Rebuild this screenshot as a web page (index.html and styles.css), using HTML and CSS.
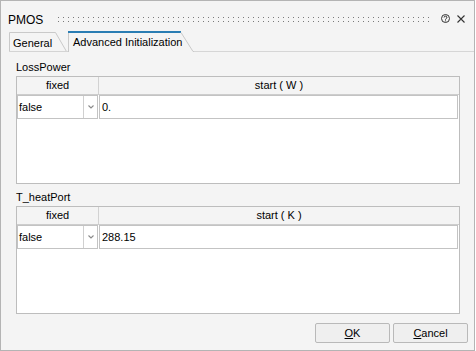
FILE: index.html
```html
<!DOCTYPE html>
<html>
<head>
<meta charset="utf-8">
<link rel="stylesheet" href="styles.css">
</head>
<body>
<div class="window">
  <div class="titlebar">
    <span class="title">PMOS</span>
    <svg class="grip" height="5"><defs><pattern id="dots" width="5" height="4" patternUnits="userSpaceOnUse"><rect width="1" height="1" fill="#7a7a7a"/></pattern></defs><rect width="100%" height="5" fill="url(#dots)"/></svg>
    <svg class="help" width="9" height="9" viewBox="0 0 9 9"><circle cx="4.5" cy="4.5" r="4" fill="none" stroke="#333" stroke-width="1"/><path d="M3.1 3.5 A1.4 1.4 0 1 1 5.2 4.7 C4.6 5 4.5 5.3 4.5 5.8" fill="none" stroke="#333" stroke-width="1"/><rect x="4" y="6.4" width="1" height="1" fill="#333"/></svg>
    <svg class="close" width="8" height="8" viewBox="0 0 8 8"><path d="M0.5 0.5 L7.5 7.5 M7.5 0.5 L0.5 7.5" stroke="#333" stroke-width="1.1"/></svg>
  </div>
  <div class="tabbar">
    <div class="tab tab-general">
      <svg class="tab-shape" width="59" height="21" viewBox="0 0 59 21"><path d="M0.5 21 V1.5 H46.5 L57.5 20.5" fill="none" stroke="#c9c9c9"/><path d="M0 20.5 H59" stroke="#d4d4d4"/></svg>
      <span class="tab-label">General</span>
    </div>
    <div class="tab tab-active">
      <svg class="tab-shape" width="126" height="21" viewBox="0 0 126 21"><path d="M0.5 21 V1" stroke="#c9c9c9"/><rect x="0" y="0" width="113" height="2" fill="#2a7db3"/><path d="M113 1.5 L125 20.5 H126" fill="none" stroke="#c9c9c9"/></svg>
      <span class="tab-label">Advanced Initialization</span>
    </div>
    <div class="tab-rest"></div>
  </div>
  <div class="panel">
    <div class="group">
      <div class="group-label">LossPower</div>
      <div class="table">
        <div class="thead">
          <div class="th th-fixed">fixed</div>
          <div class="th">start ( W )</div>
        </div>
        <div class="row">
          <div class="combo">
            <span class="combo-text">false</span>
            <span class="combo-arrow"><svg width="6" height="4" viewBox="0 0 6 4"><path d="M0.5 0.5 L3 3 L5.5 0.5" fill="none" stroke="#8a8a8a" stroke-width="1.1"/></svg></span>
          </div>
          <div class="edit">0.</div>
        </div>
      </div>
    </div>
    <div class="group">
      <div class="group-label">T_heatPort</div>
      <div class="table">
        <div class="thead">
          <div class="th th-fixed">fixed</div>
          <div class="th">start ( K )</div>
        </div>
        <div class="row">
          <div class="combo">
            <span class="combo-text">false</span>
            <span class="combo-arrow"><svg width="6" height="4" viewBox="0 0 6 4"><path d="M0.5 0.5 L3 3 L5.5 0.5" fill="none" stroke="#8a8a8a" stroke-width="1.1"/></svg></span>
          </div>
          <div class="edit">288.15</div>
        </div>
      </div>
    </div>
  </div>
  <div class="footer">
    <button class="btn"><u>O</u>K</button>
    <button class="btn"><u>C</u>ancel</button>
  </div>
</div>
</body>
</html>
```
FILE: styles.css
```css
html, body {
  margin: 0;
  padding: 0;
  background: #ffffff;
}
body {
  font-family: "Liberation Sans", Arial, sans-serif;
  font-size: 11px;
  color: #000;
}
.window {
  width: 475px;
  height: 351px;
  box-sizing: border-box;
  border: 1px solid #b4b4b4;
  background: #f4f4f4;
  display: flex;
  flex-direction: column;
}
.titlebar {
  height: 30px;
  box-sizing: border-box;
  padding: 12px 9px 0 7px;
  display: flex;
  align-items: flex-start;
}
.title {
  font-size: 12px;
  line-height: 14px;
}
.grip {
  flex: 1;
  margin: 4px 0 0 15px;
}
.help {
  margin: 1px 0 0 9px;
}
.close {
  margin: 2px 0 0 7px;
}
.tabbar {
  height: 21px;
  display: flex;
  padding-left: 8px;
}
.tab {
  position: relative;
  height: 21px;
  box-sizing: border-box;
}
.tab-shape {
  position: absolute;
  left: 0;
  top: 0;
}
.tab-label {
  position: relative;
  display: block;
  line-height: 13px;
  white-space: nowrap;
}
.tab-general {
  width: 59px;
  padding: 6px 0 0 4px;
}
.tab-active {
  width: 126px;
  padding: 5px 0 0 5px;
}
.tab-rest {
  flex: 1;
  height: 21px;
  box-sizing: border-box;
  border-bottom: 1px solid #d6d6d6;
}
.panel {
  padding: 6px 14px 0 15px;
  display: flex;
  flex-direction: column;
  gap: 4px;
}
.group-label {
  height: 18px;
  line-height: 18px;
}
.table {
  height: 108px;
  box-sizing: border-box;
  border: 1px solid #bdbdbd;
  background: #ffffff;
}
.thead {
  display: grid;
  grid-template-columns: 82px 1fr;
  height: 18px;
  box-sizing: border-box;
  background: #f4f4f4;
  border-bottom: 1px solid #cdcdcd;
}
.th {
  text-align: center;
  line-height: 17px;
}
.th-fixed {
  border-right: 1px solid #d2d2d2;
}
.row {
  display: flex;
  gap: 1px;
  padding-right: 1px;
}
.combo {
  width: 81px;
  height: 24px;
  box-sizing: border-box;
  border: 1px solid #c3c3c3;
  display: flex;
}
.combo-text {
  flex: 1;
  padding-left: 1px;
  line-height: 22px;
}
.combo-arrow {
  width: 14px;
  box-sizing: border-box;
  border-left: 1px solid #d0d0d0;
  display: flex;
  align-items: center;
  justify-content: center;
}
.edit {
  flex: 1;
  height: 24px;
  box-sizing: border-box;
  border: 1px solid #c3c3c3;
  padding-left: 2px;
  line-height: 22px;
}
.footer {
  display: flex;
  justify-content: flex-end;
  gap: 3px;
  padding: 9px 6px 0 0;
}
.btn {
  width: 75px;
  height: 20px;
  box-sizing: border-box;
  border: 1px solid #b9b9b9;
  border-radius: 2px;
  background: #efefef;
  font-family: "Liberation Sans", Arial, sans-serif;
  font-size: 11px;
  color: #000;
  padding: 0;
  line-height: 18px;
}
.btn u {
  text-decoration: underline;
}
```
